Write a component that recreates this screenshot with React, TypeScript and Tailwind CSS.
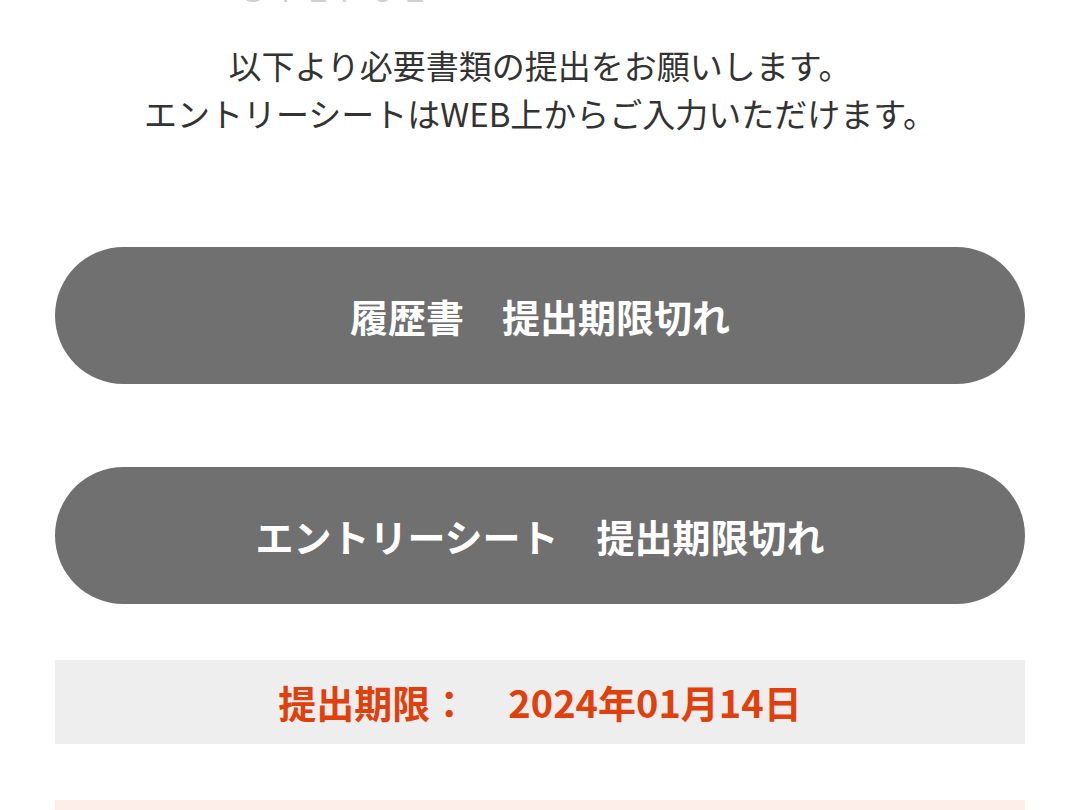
import React from 'react';

const jp = { fontFamily: '"Noto Sans CJK JP", "Noto Sans", sans-serif' };

const ExpiredButton = ({ label }: { label: string }) => (
  <button
    type="button"
    disabled
    className="w-full h-[137px] rounded-full bg-[#707070] text-white text-[38px] font-bold leading-none flex items-center justify-center"
  >
    {label}
  </button>
);

export default function App() {
  return (
    <div className="h-[810px] bg-white overflow-hidden text-[#333333]" style={jp}>
      {/* heading above the fold, only its bottom edge shows */}
      <p className="-mt-[26px] h-[26px] pl-[238px] text-[30px] leading-[30px] font-normal text-[#d0d0d0] tracking-[0.08em]">
        ＳＴＥＰ０２
      </p>

      <div className="px-[55px]">
        <div className="pt-[41px] text-center text-[33px] leading-[48px] font-normal">
          <p>以下より必要書類の提出をお願いします。</p>
          <p>エントリーシートはWEB上からご入力いただけます。</p>
        </div>

        <div className="mt-[110px] flex flex-col gap-[83px]">
          <ExpiredButton label="履歴書　提出期限切れ" />
          <ExpiredButton label="エントリーシート　提出期限切れ" />
        </div>

        <div className="mt-[56px] h-[84px] bg-[#eeeeee] flex items-center justify-center text-[#e0400c] text-[38px] font-bold leading-none">
          <span>提出期限：</span>
          <span className="ml-[40px]">2024年01月14日</span>
        </div>

        <div className="mt-[56px] h-[120px] bg-[#fdeeea]" />
      </div>
    </div>
  );
}
